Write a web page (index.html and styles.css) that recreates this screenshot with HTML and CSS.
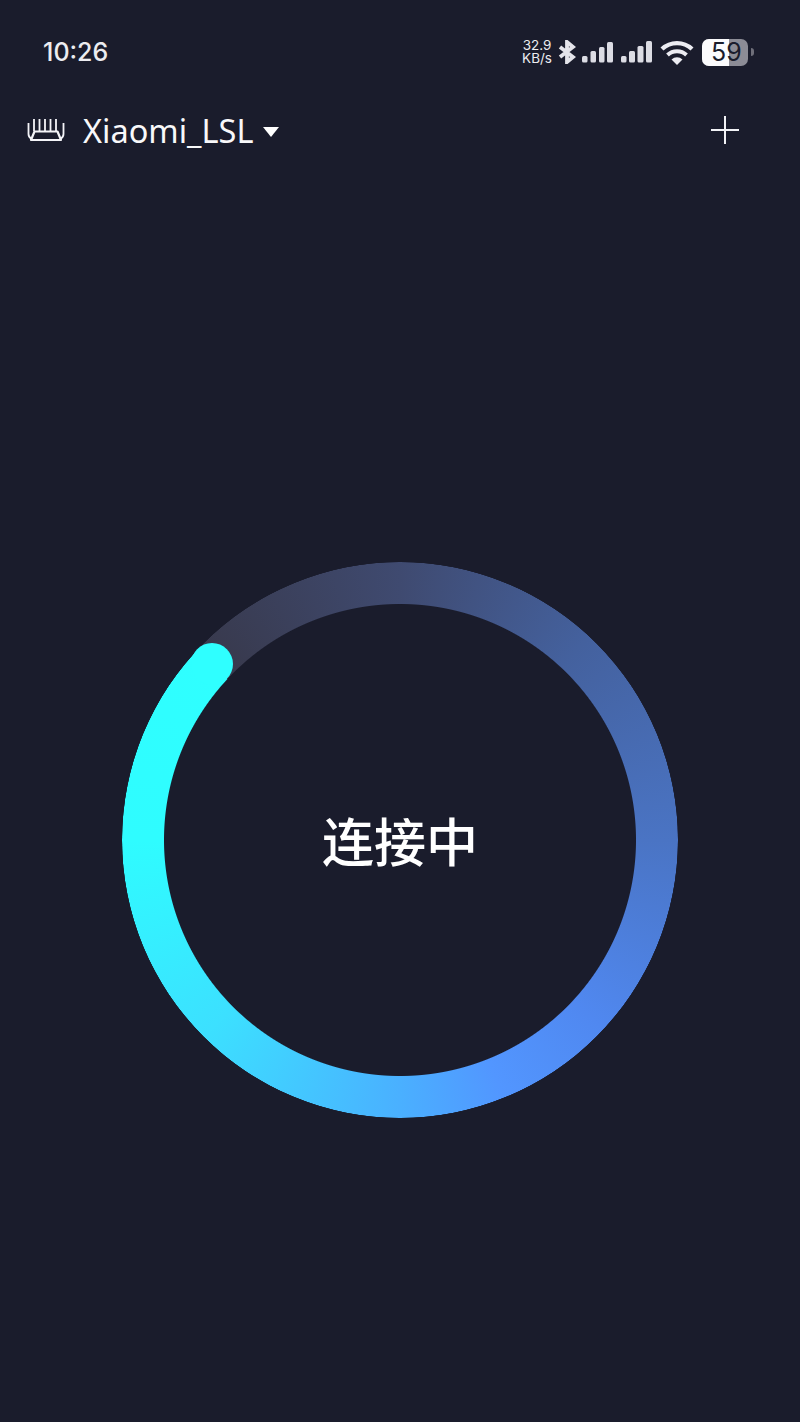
FILE: index.html
```html
<!DOCTYPE html>
<html lang="zh">
<head>
    <meta charset="UTF-8">
    <title>连接中</title>
    <link rel="stylesheet" href="styles.css">
</head>
<body>
    <div class="status-bar">
        <span class="clock">10:26</span>
        <div class="status-icons">
            <div class="speed">
                <span>32.9</span>
                <span>KB/s</span>
            </div>
            <svg class="icon-bt" width="18" height="24" viewBox="0 0 18 24">
                <path d="M2 7l13 10-6 5V2l6 5L2 17" fill="none" stroke="#e4e4ea" stroke-width="3.8"/>
            </svg>
            <svg class="icon-signal" width="31" height="21" viewBox="0 0 31 21">
                <rect x="0" y="14" width="5.500" height="6.500" rx="1.500"/>
                <rect x="8.500" y="9" width="5.500" height="11.500" rx="1.500"/>
                <rect x="17" y="5" width="5.500" height="15.500" rx="1.500"/>
                <rect x="25" y="0" width="6" height="20.500" rx="1.500"/>
            </svg>
            <svg class="icon-signal" width="31" height="22" viewBox="0 0 31 22">
                <rect x="0" y="15" width="5.500" height="6.500" rx="1.500"/>
                <rect x="8" y="10" width="6" height="11.500" rx="1.500"/>
                <rect x="16.500" y="5" width="6" height="16.500" rx="1.500"/>
                <rect x="25" y="0" width="6" height="21.500" rx="1.500"/>
            </svg>
            <svg class="icon-wifi" width="34" height="25" viewBox="0 0 34 25">
                <path d="M2 9a22 22 0 0 1 30 0" fill="none" stroke="#ececf2" stroke-width="4.400"/>
                <path d="M7.500 15a14 14 0 0 1 19 0" fill="none" stroke="#ececf2" stroke-width="4"/>
                <path d="M11.500 19.500a8 8 0 0 1 11 0L17 25z" fill="#ececf2"/>
            </svg>
            <div class="battery">
                <div class="battery-body">
                    <div class="battery-level"></div>
                    <span class="battery-num">59</span>
                </div>
                <div class="battery-tip"></div>
            </div>
        </div>
    </div>

    <div class="top-bar">
        <svg class="icon-router" width="38" height="26" viewBox="0 0 38 26">
            <path d="M7 2v12M12.500 2v12M18 2v12M23.500 2v12M29 2v12" fill="none" stroke="#f4f4f8" stroke-width="1.800"/>
            <path d="M1.500 6v11q0 3 3 5M36.500 6v11q0 3-3 5" fill="none" stroke="#f4f4f8" stroke-width="1.800"/>
            <path d="M7.500 14.500h23l3.500 8.500H4z" fill="none" stroke="#f4f4f8" stroke-width="2.200" stroke-linejoin="round"/>
        </svg>
        <span class="router-name">Xiaomi_LSL</span>
        <div class="caret"></div>
        <svg class="icon-plus" width="30" height="30" viewBox="0 0 30 30">
            <path d="M15 1v28M1 15h28" stroke="#f2f2f6" stroke-width="2"/>
        </svg>
    </div>

    <div class="ring-wrap">
        <div class="ring">
            <div class="ring-track"></div>
            <div class="ring-cap"></div>
            <div class="ring-label">连接中</div>
        </div>
    </div>
</body>
</html>
```

FILE: styles.css
```css
html, body {
    margin: 0;
    padding: 0;
}
body {
    width: 800px;
    height: 1422px;
    overflow: hidden;
    background-color: #1a1c2c;
    color: #fff;
    font-family: "Noto Sans", "Noto Sans CJK SC", sans-serif;
}
.status-bar {
    display: flex;
    justify-content: space-between;
    align-items: center;
    height: 30px;
    padding: 37px 46px 0 43px;
}
.clock {
    font-family: Inter, sans-serif;
    font-size: 25px;
    font-weight: 500;
    color: #ececf0;
}
.status-icons {
    display: flex;
    align-items: center;
}
.speed {
    display: flex;
    flex-direction: column;
    align-items: center;
    font-family: Inter, sans-serif;
    font-size: 13.5px;
    line-height: 13px;
    color: #ececf0;
    margin-right: 6px;
}
.icon-bt {
    margin-right: 6px;
}
.icon-signal {
    fill: #dcdce4;
    margin-right: 8px;
}
.icon-wifi {
    margin-right: 8px;
}
.battery {
    display: flex;
    align-items: center;
}
.battery-body {
    position: relative;
    width: 46px;
    height: 27px;
    border-radius: 7px;
    background-color: #8c8c96;
}
.battery-level {
    width: 27px;
    height: 100%;
    border-radius: 7px 0 0 7px;
    background-color: #fbfbfd;
}
.battery-num {
    position: absolute;
    top: 0;
    left: 9px;
    font-family: Inter, sans-serif;
    font-size: 25px;
    line-height: 27px;
    color: #1a1c2c;
}
.battery-tip {
    width: 3px;
    height: 8px;
    margin-left: 3px;
    background-color: #6f6f7a;
    border-radius: 0 3px 3px 0;
}
.top-bar {
    display: flex;
    align-items: center;
    height: 44px;
    margin-top: 41px;
    padding: 0 60px 0 27px;
}
.router-name {
    margin-left: 18px;
    font-size: 32.5px;
    color: #f8f8fa;
}
.caret {
    width: 0;
    height: 0;
    margin-left: 10px;
    margin-top: 3px;
    border-left: 8px solid transparent;
    border-right: 8px solid transparent;
    border-top: 10px solid #fff;
}
.icon-plus {
    margin-left: auto;
}
.ring-wrap {
    display: flex;
    justify-content: center;
    margin-top: 410px;
}
.ring {
    position: relative;
    width: 556px;
    height: 556px;
}
.ring-track {
    width: 100%;
    height: 100%;
    border-radius: 50%;
    background: conic-gradient(from 313deg,
        #38394c 0deg,
        #3f4a70 47deg,
        #44619e 90deg,
        #4a74c4 137deg,
        #5088f0 180deg,
        #5296ff 205deg,
        #4ab0ff 227deg,
        #3ce0ff 272deg,
        #2ffcff 317deg,
        #2fffff 360deg);
    -webkit-mask: radial-gradient(circle closest-side, transparent 235.5px, #000 236.5px, #000 277.5px, transparent 278.5px);
    mask: radial-gradient(circle closest-side, transparent 235.5px, #000 236.5px, #000 277.5px, transparent 278.5px);
}
.ring-cap {
    position: absolute;
    top: 81px;
    left: 69px;
    width: 42px;
    height: 42px;
    border-radius: 50%;
    background-color: #2fffff;
}
.ring-label {
    position: absolute;
    top: 50%;
    left: 0;
    right: 0;
    transform: translateY(-50%);
    text-align: center;
    font-family: "Noto Sans CJK SC", sans-serif;
    font-size: 52px;
    font-weight: 500;
    line-height: 60px;
    color: #fff;
}
```
